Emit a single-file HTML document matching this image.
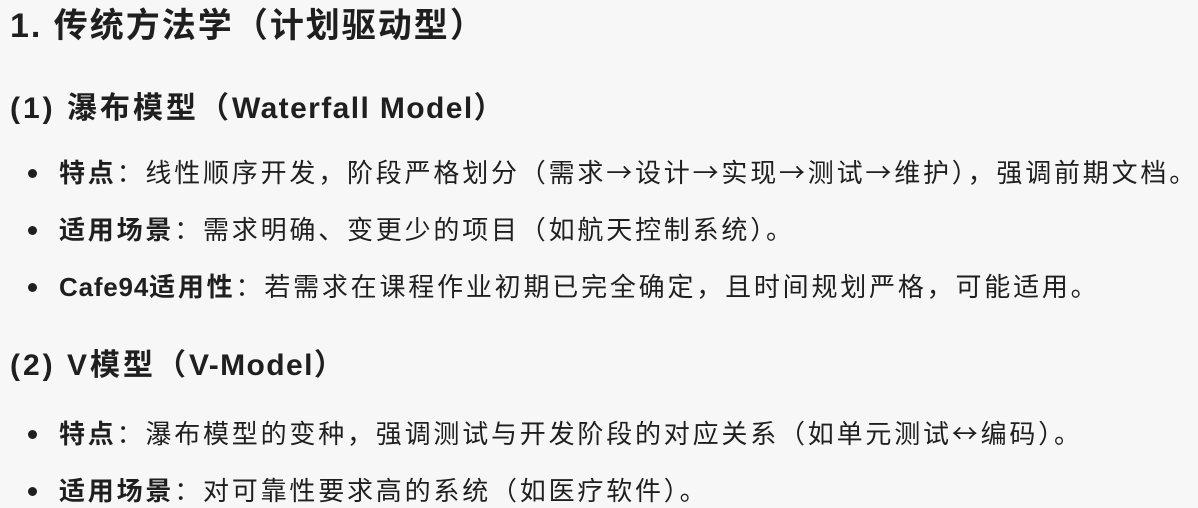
<!DOCTYPE html>
<html><head><meta charset="utf-8"><style>
html,body{margin:0;padding:0;background:#f7f7f7;width:1198px;height:508px;overflow:hidden}
body{font-family:"Liberation Sans","Noto Sans CJK SC",sans-serif;color:#1f1f1f;position:relative}
.t{position:absolute;white-space:nowrap;left:10px}
.h1{font-size:34px;top:-2px;letter-spacing:2px}
.h2{font-size:30px;top:83px;letter-spacing:3px}
.li{position:absolute;left:59px;font-size:26px;letter-spacing:2.8px;white-space:nowrap;line-height:34px}
.li::before{content:"";position:absolute;left:-31px;top:14px;width:9px;height:9px;border-radius:50%;background:#1f1f1f}
.c{font-family:"Noto Sans CJK SC",sans-serif}
.l{letter-spacing:0.8px}
b{font-weight:bold}
</style></head><body>
<div class="t h1"><b>1. 传统方法学<span class="c">（</span>计划驱动型<span class="c">）</span></b></div>
<div class="t h2"><b>(1) 瀑布模型<span class="c">（</span><span style="letter-spacing:1.4px">Waterfall Model</span><span class="c">）</span></b></div>
<div class="li c" style="top:155px"><b>特点</b>：线性顺序开发，阶段严格划分（需求→设计→实现→测试→维护），强调前期文档。</div>
<div class="li c" style="top:212px"><b>适用场景</b>：需求明确、变更少的项目（如航天控制系统）。</div>
<div class="li c" style="top:269px"><b><span class="l" style="font-family:'Liberation Sans',sans-serif">Cafe94</span>适用性</b>：若需求在课程作业初期已完全确定，且时间规划严格，可能适用。</div>
<div class="t h2" style="top:340px"><b>(2) V模型<span class="c">（</span><span style="letter-spacing:1.4px">V-Model</span><span class="c">）</span></b></div>
<div class="li c" style="top:416px"><b>特点</b>：瀑布模型的变种，强调测试与开发阶段的对应关系（如单元测试↔编码）。</div>
<div class="li c" style="top:473px"><b>适用场景</b>：对可靠性要求高的系统（如医疗软件）。</div>
</body></html>
